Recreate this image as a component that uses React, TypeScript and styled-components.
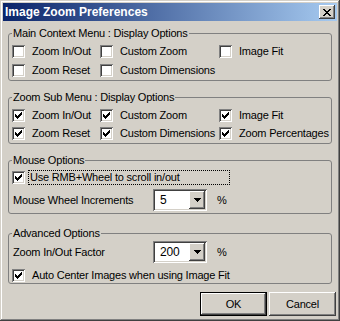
import React from 'react';
import styled, { createGlobalStyle } from 'styled-components';

const FACE = '#d4d0c8';
const SHADOW = '#808080';
const DARK = '#404040';

const GlobalStyle = createGlobalStyle`
  * { box-sizing: border-box; }
  body {
    margin: 0;
    background: #fff;
  }
`;

const raised = `
  box-shadow: inset -1px -1px 0 ${DARK}, inset 1px 1px 0 #fff,
    inset -2px -2px 0 ${SHADOW}, inset 2px 2px 0 ${FACE};
`;

const sunken = `
  box-shadow: inset 1px 1px 0 ${SHADOW}, inset -1px -1px 0 #fff,
    inset 2px 2px 0 ${DARK}, inset -2px -2px 0 ${FACE};
`;

const Window = styled.div`
  width: 340px;
  height: 321px;
  padding: 3px;
  display: flex;
  flex-direction: column;
  background: ${FACE};
  font-family: 'Liberation Sans', Arial, sans-serif;
  font-size: 11px;
  letter-spacing: -0.2px;
  color: #000;
  box-shadow: inset -1px -1px 0 ${DARK}, inset 1px 1px 0 ${FACE},
    inset -2px -2px 0 ${SHADOW}, inset 2px 2px 0 #fff;
`;

const TitleBar = styled.div`
  height: 18px;
  flex: none;
  display: flex;
  align-items: center;
  justify-content: space-between;
  padding: 0 2px 0 2px;
  background: linear-gradient(to right, #0a246a, #a6caf0);
  color: #fff;
  font-weight: bold;
  font-size: 12px;
  letter-spacing: 0;
`;

const CloseButton = styled.div`
  width: 16px;
  height: 14px;
  display: flex;
  align-items: center;
  justify-content: center;
  background: ${FACE};
  ${raised}
  svg {
    display: block;
    margin: 0 0 0 -1px;
  }
`;

const Content = styled.div`
  flex: 1;
  display: flex;
  flex-direction: column;
  padding: 0 5px;
`;

const Group = styled.fieldset<{ $top: number; $pad: string }>`
  margin: ${(p) => p.$top}px 0 0 0;
  min-width: 0;
  padding: ${(p) => p.$pad};
  border: 1px solid ${SHADOW};
  border-radius: 3px;
  display: flex;
  flex-direction: column;
`;

const Legend = styled.legend`
  padding: 0 1px;
  margin: 0;
  line-height: 13px;
  height: 13px;
`;

const Grid = styled.div<{ $gap: number }>`
  display: grid;
  grid-template-columns: 88px 119px auto;
  row-gap: ${(p) => p.$gap}px;
`;

const Check = styled.label<{ $focus?: boolean; $width?: number }>`
  display: flex;
  align-items: center;
  height: 13px;
  white-space: nowrap;
  span {
    margin-left: ${(p) => (p.$focus ? 3 : 5)}px;
    padding: 0 1px;
    height: 15px;
    line-height: 13px;
    width: ${(p) => (p.$width ? `${p.$width}px` : 'auto')};
    border: 1px dotted ${(p) => (p.$focus ? '#000' : 'transparent')};
  }
`;

const Box = styled.div`
  width: 13px;
  height: 13px;
  flex: none;
  padding: 3px;
  background: #fff;
  ${sunken}
  svg {
    display: block;
  }
`;

const FieldRow = styled.div<{ $top?: number }>`
  display: flex;
  align-items: center;
  height: 22px;
  margin-top: ${(p) => p.$top ?? 0}px;
`;

const FieldLabel = styled.div`
  width: 141px;
  padding-left: 1px;
`;

const Combo = styled.div`
  width: 54px;
  height: 22px;
  padding: 2px;
  display: flex;
  background: #fff;
  ${sunken}
`;

const ComboText = styled.div`
  flex: 1;
  padding-left: 5px;
  font-size: 12px;
  line-height: 18px;
`;

const ComboButton = styled.div`
  width: 16px;
  height: 18px;
  display: flex;
  align-items: center;
  justify-content: center;
  background: ${FACE};
  ${raised}
`;

const Unit = styled.div`
  margin-left: 10px;
`;

const CheckLine = styled.div<{ $top: number }>`
  margin-top: ${(p) => p.$top}px;
`;

const Buttons = styled.div`
  display: flex;
  justify-content: flex-end;
  gap: 2px;
  margin: 8px -4px 0 0;
`;

const Button = styled.div<{ $default?: boolean }>`
  width: 67px;
  height: 24px;
  display: flex;
  align-items: center;
  justify-content: center;
  background: ${FACE};
  ${(p) =>
    p.$default
      ? `box-shadow: inset 0 0 0 1px #000, inset -2px -2px 0 ${DARK}, inset 2px 2px 0 #fff, inset -3px -3px 0 ${SHADOW};`
      : raised}
`;

const Tick = () => (
  <svg width="7" height="7" viewBox="0 0 7 7" shapeRendering="crispEdges">
    <path
      d="M0 2h1v3H0zM1 3h1v3H1zM2 4h1v3H2zM3 3h1v3H3zM4 2h1v3H4zM5 1h1v3H5zM6 0h1v3H6z"
      fill="#000"
    />
  </svg>
);

const CheckBox: React.FC<{ label: string; checked?: boolean; focus?: boolean; width?: number }> = ({
  label,
  checked,
  focus,
  width,
}) => (
  <Check $focus={focus} $width={width}>
    <Box>{checked && <Tick />}</Box>
    <span>{label}</span>
  </Check>
);

const Arrow = () => (
  <svg width="7" height="4" viewBox="0 0 7 4" shapeRendering="crispEdges">
    <path d="M0 0h7v1H0zM1 1h5v1H1zM2 2h3v1H2zM3 3h1v1H3z" fill="#000" />
  </svg>
);

const Select: React.FC<{ value: string }> = ({ value }) => (
  <Combo>
    <ComboText>{value}</ComboText>
    <ComboButton>
      <Arrow />
    </ComboButton>
  </Combo>
);

const CloseGlyph = () => (
  <svg width="8" height="7" viewBox="0 0 8 7" shapeRendering="crispEdges">
    <path
      d="M0 0h2v1H0zM6 0h2v1H6zM1 1h2v1H1zM5 1h2v1H5zM2 2h4v1H2zM3 3h2v1H3zM2 4h4v1H2zM1 5h2v1H1zM5 5h2v1H5zM0 6h2v1H0zM6 6h2v1H6z"
      fill="#000"
    />
  </svg>
);

const App: React.FC = () => (
  <>
    <GlobalStyle />
    <Window>
      <TitleBar>
        <span>Image Zoom Preferences</span>
        <CloseButton>
          <CloseGlyph />
        </CloseButton>
      </TitleBar>
      <Content>
        <Group $top={6} $pad="5px 3px 3px">
          <Legend>Main Context Menu : Display Options</Legend>
          <Grid $gap={6}>
            <CheckBox label="Zoom In/Out" />
            <CheckBox label="Custom Zoom" />
            <CheckBox label="Image Fit" />
            <CheckBox label="Zoom Reset" />
            <CheckBox label="Custom Dimensions" />
          </Grid>
        </Group>
        <Group $top={10} $pad="5px 3px 3px">
          <Legend>Zoom Sub Menu : Display Options</Legend>
          <Grid $gap={5}>
            <CheckBox label="Zoom In/Out" checked />
            <CheckBox label="Custom Zoom" checked />
            <CheckBox label="Image Fit" checked />
            <CheckBox label="Zoom Reset" checked />
            <CheckBox label="Custom Dimensions" checked />
            <CheckBox label="Zoom Percentages" checked />
          </Grid>
        </Group>
        <Group $top={10} $pad="4px 3px 2px">
          <Legend>Mouse Options</Legend>
          <CheckBox label="Use RMB+Wheel to scroll in/out" checked focus width={202} />
          <FieldRow $top={5}>
            <FieldLabel>Mouse Wheel Increments</FieldLabel>
            <Select value="5" />
            <Unit>%</Unit>
          </FieldRow>
        </Group>
        <Group $top={13} $pad="1px 3px 1px">
          <Legend>Advanced Options</Legend>
          <FieldRow>
            <FieldLabel>Zoom In/Out Factor</FieldLabel>
            <Select value="200" />
            <Unit>%</Unit>
          </FieldRow>
          <CheckLine $top={6}>
            <CheckBox label="Auto Center Images when using Image Fit" checked />
          </CheckLine>
        </Group>
        <Buttons>
          <Button $default>OK</Button>
          <Button>Cancel</Button>
        </Buttons>
      </Content>
    </Window>
  </>
);

export default App;
